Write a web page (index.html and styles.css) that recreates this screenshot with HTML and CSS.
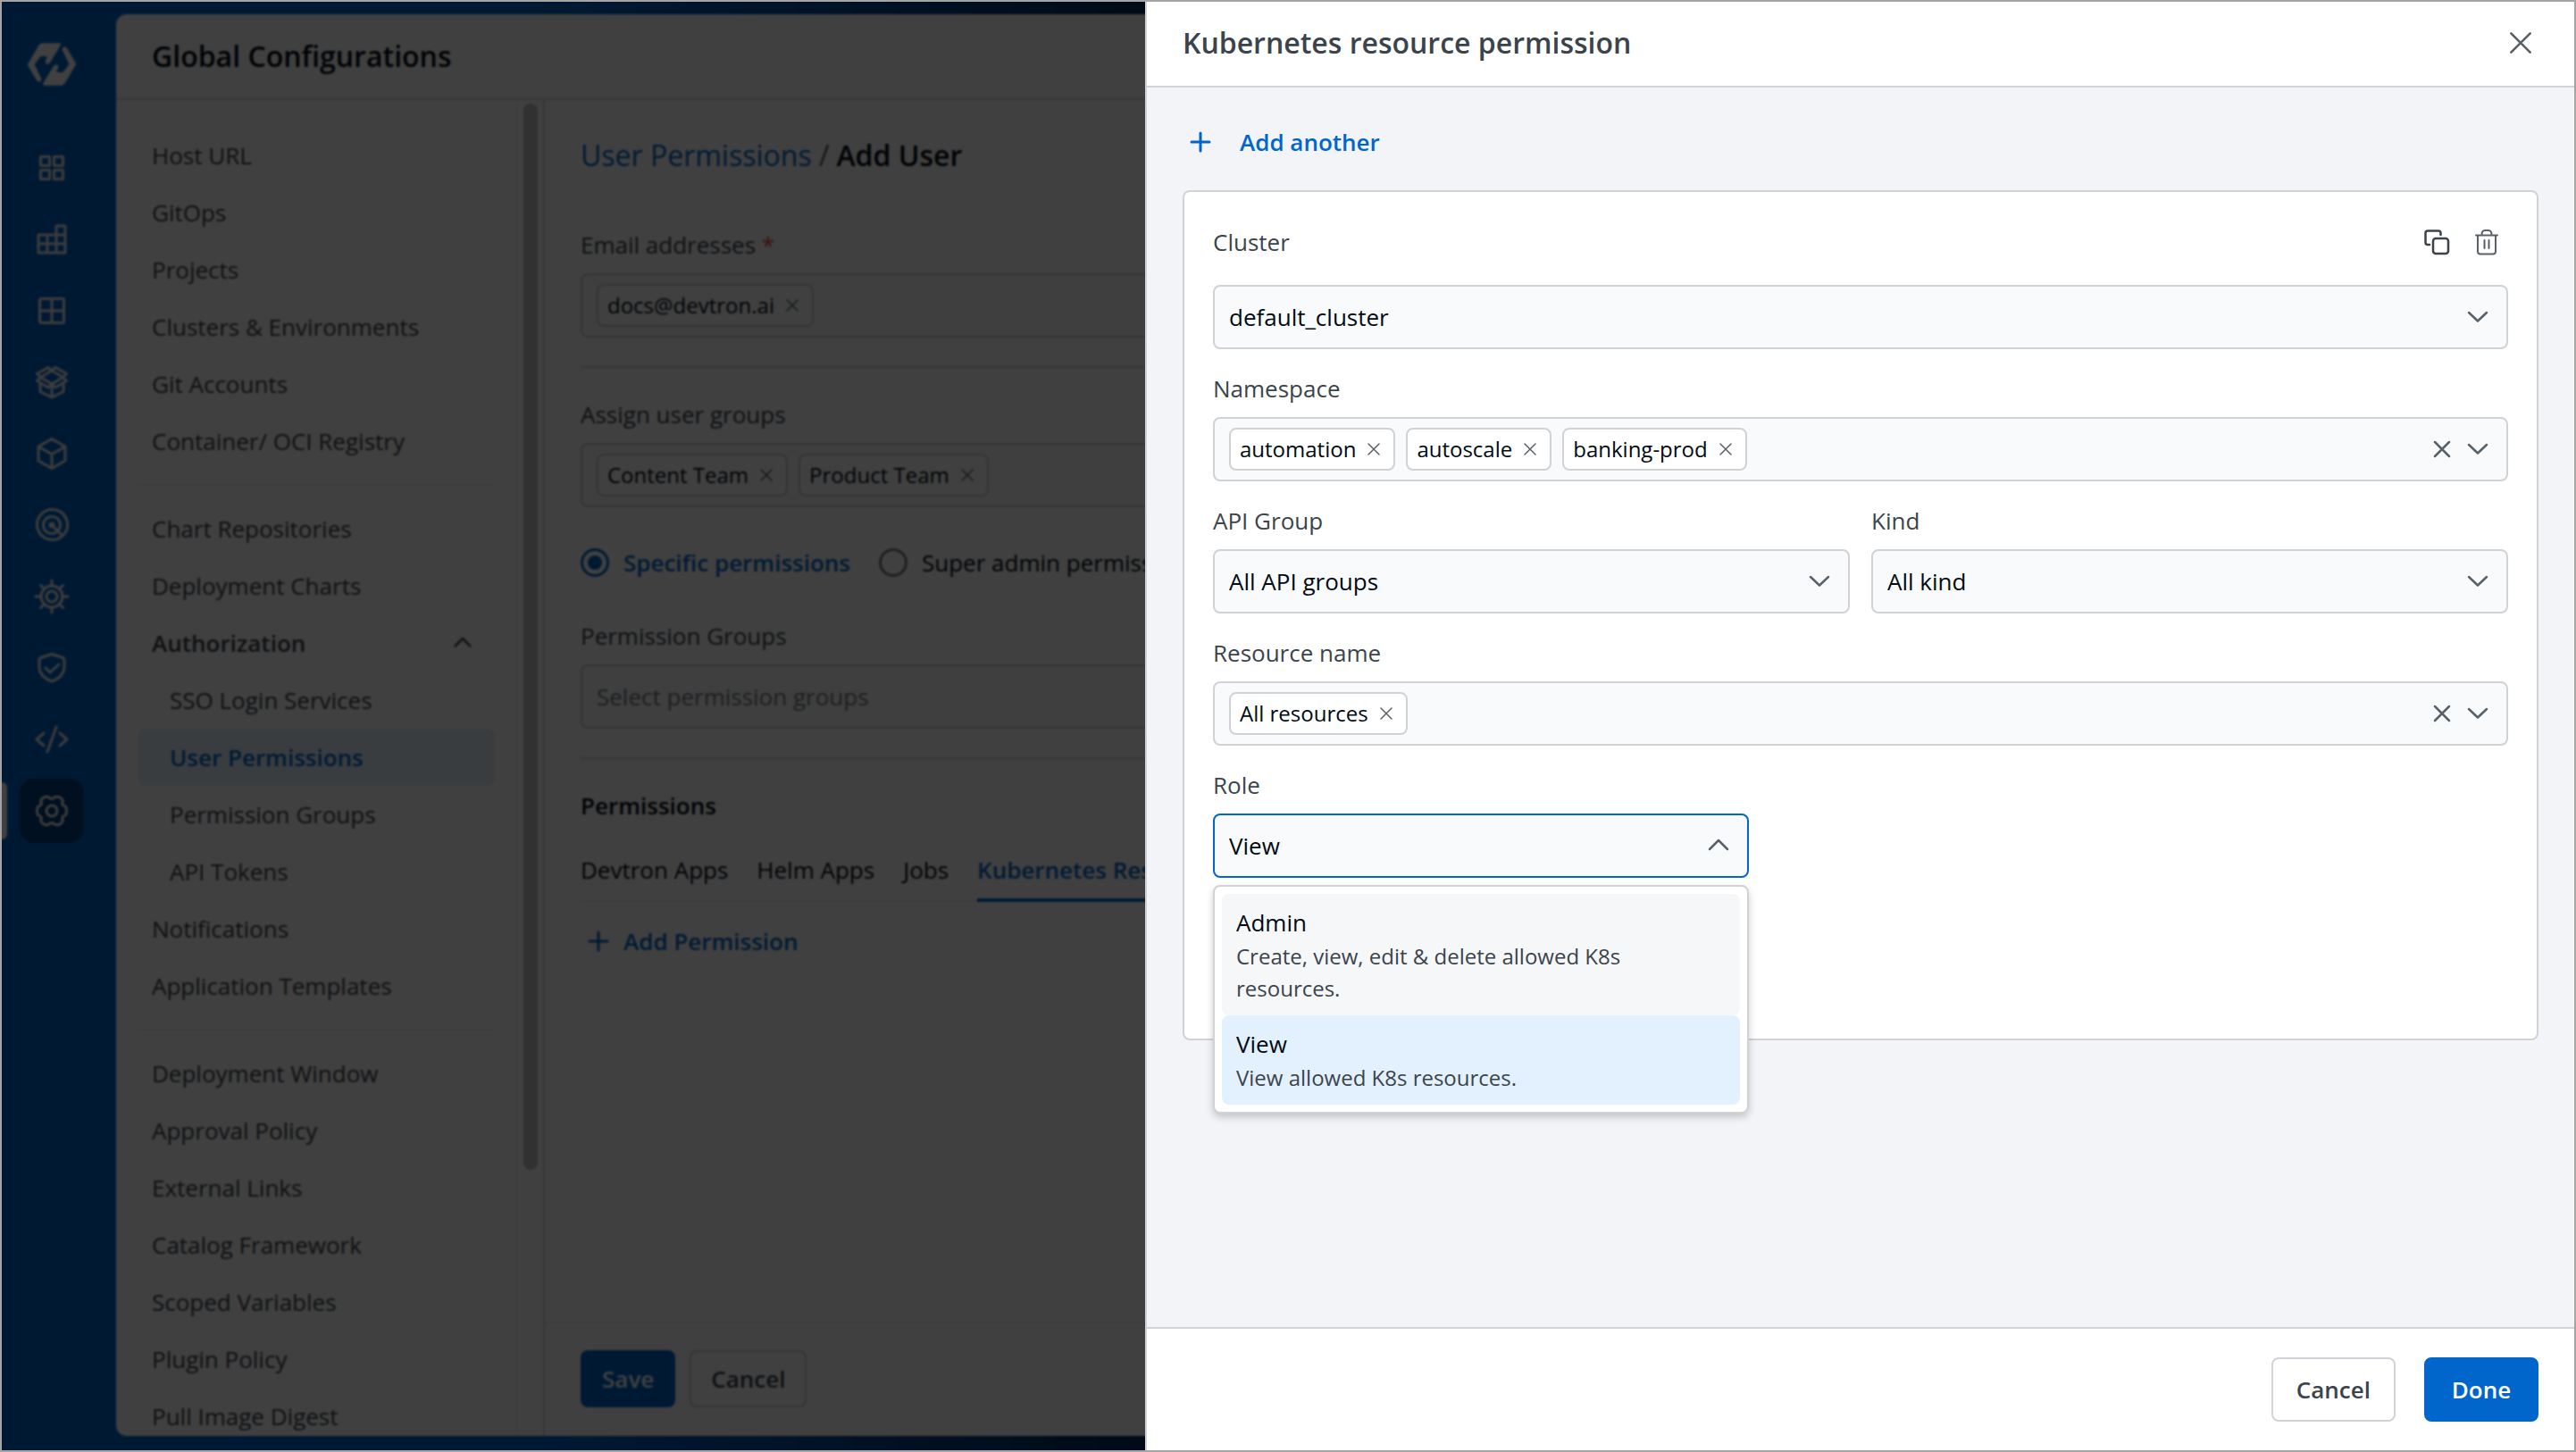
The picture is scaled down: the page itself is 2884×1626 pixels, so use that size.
FILE: index.html
```html
<!DOCTYPE html>
<html lang="en">
<head>
  <meta charset="UTF-8">
  <meta name="viewport" content="width=device-width, initial-scale=1.0">
  <title>Kubernetes resource permission</title>
  <link rel="stylesheet" href="styles.css">
</head>
<body>
  <!-- Shared icons -->
  <svg class="sprite" aria-hidden="true">
    <symbol id="i-close" viewBox="0 0 24 24"><path d="M4 4l16 16M20 4L4 20"/></symbol>
    <symbol id="i-down" viewBox="0 0 24 24"><path d="M2 7l10 9.500L22 7"/></symbol>
    <symbol id="i-up" viewBox="0 0 24 24"><path d="M2 16l10-10 10 10"/></symbol>
    <symbol id="i-plus" viewBox="0 0 24 24"><path d="M12 2v20M2 12h20"/></symbol>
  </svg>

  <div class="page">
    <nav class="rail" aria-label="Main">
      <a class="logo" href="#" aria-label="Home">
        <svg width="54" height="48" viewBox="93 37 163 145">
          <path id="logo-half" d="M95 106L130 46Q135 38 144 38H198Q208 38 203 47L168 104Q163 111 157 108Q151 105 153 98L158 86Q159 82 154 82H140Q136 82 134 86L116 110L139 158Q141 165 134 168Q128 170 124 165L95 116Q92 111 95 106Z"/>
          <use href="#logo-half" transform="rotate(180 174.500 109.500)"/>
        </svg>
      </a>
      <a class="rail-link" href="#" aria-label="Applications"><svg viewBox="0 0 40 40"><path d="M7.500 7.500h10v10h-10zM22.500 7.500h10v10h-10zM7.500 22.500h10v10h-10zM22.500 22.500h10v10h-10z"/></svg></a>
      <a class="rail-link" href="#" aria-label="Jobs"><svg viewBox="0 0 40 40"><path d="M5 15h30v20H5zM25 35V5h10v10M5 25h30M15 15v20"/></svg></a>
      <a class="rail-link" href="#" aria-label="Application groups"><svg viewBox="0 0 40 40"><rect x="6.500" y="6.500" width="27" height="27" rx="2"/><path d="M20 7v26M7 20h26"/></svg></a>
      <a class="rail-link" href="#" aria-label="Software distribution"><svg viewBox="0 0 40 40"><path d="M3.500 10.500L16 3.500L20 7L24 3.500L36.500 10.500L32.500 14.500L36.500 18.500L24 26L20 22L16 26L3.500 18.500L7.500 14.500ZM20 7L32.500 14.500L20 22L7.500 14.500ZM7 22.500V30.500L20 37L33 30.500V22.500M20 23V36"/></svg></a>
      <a class="rail-link" href="#" aria-label="Resource browser"><svg viewBox="0 0 40 40"><path d="M20 3.500L35 12V28L20 36.500L5 28V12ZM5.500 12.500L20 20.500L34.500 12.500M20 20.500V36"/></svg></a>
      <a class="rail-link" href="#" aria-label="Resource watcher"><svg viewBox="0 0 40 40"><path d="M32 32A17 17 0 1 1 33 31M28 25A9.500 9.500 0 1 0 25 28M20 20l12 12"/><circle cx="20" cy="20" r="2"/></svg></a>
      <a class="rail-link" href="#" aria-label="Clusters"><svg viewBox="0 0 40 40"><circle cx="20" cy="20" r="12"/><circle cx="20" cy="20" r="6"/><path d="M20 8V2M20 32v6M8 20H2M32 20h6M11.500 11.500L7.500 7.500M28.500 11.500l4-4M11.500 28.500l-4 4M28.500 28.500l4 4"/></svg></a>
      <a class="rail-link" href="#" aria-label="Security"><svg viewBox="0 0 40 40"><path d="M20 4.500L32 8.500Q34 9 34 11V18Q34 30 20 35Q6 30 6 18V11Q6 9 8 8.500ZM13 20l5 5 10-9"/></svg></a>
      <a class="rail-link" href="#" aria-label="Bulk edit"><svg viewBox="0 0 40 40"><path d="M11 13L3 20l8 7M29 13l8 7-8 7M25 6L15 34"/></svg></a>
      <a class="rail-link rail-link-active" href="#" aria-label="Global configurations"><svg viewBox="0 0 40 40"><path d="M36.500 20Q36.500 25 34 25.600Q30.500 26.500 32.200 29.800Q33 32.500 29 35Q25 36.500 22.400 34.500Q20 32.500 17.600 34.500Q15 36.500 11 35Q7 32.500 7.800 29.800Q9.500 26.500 6 25.600Q3.500 25 3.500 20Q3.500 15 6 14.400Q9.500 13.500 7.800 10.200Q7 7.500 11 5Q15 3.500 17.600 5.500Q20 7.500 22.400 5.500Q25 3.500 29 5Q33 7.500 32.200 10.200Q30.500 13.500 34 14.400Q36.500 15 36.500 20Z"/><circle cx="20" cy="20" r="6"/></svg></a>
    </nav>

    <div class="shell">
      <header class="shell-header">
        <h1 class="title">Global Configurations</h1>
      </header>

      <div class="shell-body">
        <div class="menu">
          <nav class="menu-list" aria-label="Global configurations">
            <a class="menu-item" href="#">Host URL</a>
            <a class="menu-item" href="#">GitOps</a>
            <a class="menu-item" href="#">Projects</a>
            <a class="menu-item" href="#">Clusters &amp; Environments</a>
            <a class="menu-item" href="#">Git Accounts</a>
            <a class="menu-item" href="#">Container/ OCI Registry</a>
            <hr class="menu-rule">
            <a class="menu-item" href="#">Chart Repositories</a>
            <a class="menu-item" href="#">Deployment Charts</a>
            <button class="menu-item menu-toggle" type="button" aria-expanded="true">
              Authorization
              <svg class="icon icon-20 icon-bold"><use href="#i-up"/></svg>
            </button>
            <a class="menu-item menu-sub" href="#">SSO Login Services</a>
            <a class="menu-item menu-sub menu-active" href="#">User Permissions</a>
            <a class="menu-item menu-sub" href="#">Permission Groups</a>
            <a class="menu-item menu-sub" href="#">API Tokens</a>
            <a class="menu-item" href="#">Notifications</a>
            <a class="menu-item" href="#">Application Templates</a>
            <hr class="menu-rule">
            <a class="menu-item" href="#">Deployment Window</a>
            <a class="menu-item" href="#">Approval Policy</a>
            <a class="menu-item" href="#">External Links</a>
            <a class="menu-item" href="#">Catalog Framework</a>
            <a class="menu-item" href="#">Scoped Variables</a>
            <a class="menu-item" href="#">Plugin Policy</a>
            <a class="menu-item" href="#">Pull Image Digest</a>
          </nav>
          <div class="scroll-track"><div class="scroll-thumb"></div></div>
        </div>

        <main class="content">
          <form class="user-form">
            <div class="breadcrumb">
              <a href="#">User Permissions</a>
              <span class="slash">/</span>
              <strong>Add User</strong>
            </div>

            <div class="field">
              <label for="emails">Email addresses <span class="required">*</span></label>
              <div class="control">
                <span class="chip">docs@devtron.ai <button type="button" aria-label="Remove docs@devtron.ai"><svg class="icon icon-18"><use href="#i-close"/></svg></button></span>
                <input id="emails" type="text">
              </div>
            </div>

            <hr class="rule">

            <div class="field">
              <label for="groups">Assign user groups</label>
              <div class="control">
                <span class="chip">Content Team <button type="button" aria-label="Remove Content Team"><svg class="icon icon-18"><use href="#i-close"/></svg></button></span>
                <span class="chip">Product Team <button type="button" aria-label="Remove Product Team"><svg class="icon icon-18"><use href="#i-close"/></svg></button></span>
                <input id="groups" type="text">
              </div>
            </div>

            <div class="radios">
              <label class="radio radio-on"><input type="radio" name="access" checked>Specific permissions</label>
              <label class="radio"><input type="radio" name="access">Super admin permission</label>
            </div>

            <div class="field">
              <label for="perm-groups">Permission Groups</label>
              <div class="control">
                <input id="perm-groups" type="text" placeholder="Select permission groups">
              </div>
            </div>

            <hr class="rule">

            <h2 class="section-title">Permissions</h2>
            <div class="tabs" role="tablist">
              <button class="tab" type="button" role="tab">Devtron Apps</button>
              <button class="tab" type="button" role="tab">Helm Apps</button>
              <button class="tab" type="button" role="tab">Jobs</button>
              <button class="tab tab-active" type="button" role="tab" aria-selected="true">Kubernetes Resources</button>
            </div>
            <button class="add-permission" type="button">
              <svg class="icon icon-24 icon-bold"><use href="#i-plus"/></svg>Add Permission
            </button>
          </form>

          <footer class="form-footer">
            <button class="btn btn-primary" type="button">Save</button>
            <button class="btn" type="button">Cancel</button>
          </footer>
        </main>
      </div>
    </div>

    <div class="backdrop"></div>

    <!-- Side drawer -->
    <section class="drawer" role="dialog" aria-labelledby="drawer-title">
      <header class="drawer-header">
        <h2 class="title" id="drawer-title">Kubernetes resource permission</h2>
        <button class="icon-btn" type="button" aria-label="Close"><svg class="icon icon-32"><use href="#i-close"/></svg></button>
      </header>

      <div class="drawer-body">
        <button class="add-another" type="button">
          <svg class="icon icon-24 icon-bold"><use href="#i-plus"/></svg>Add another
        </button>

        <div class="card">
          <div class="card-top">
            <label for="cluster">Cluster</label>
            <div class="card-actions">
              <button class="icon-btn" type="button" aria-label="Duplicate">
                <svg class="icon icon-32 icon-dark" viewBox="0 0 32 32"><path d="M8 19H6Q3.500 19 3.500 16.500V6Q3.500 3.500 6 3.500H18Q20.500 3.500 20.500 6V8"/><rect x="12" y="12" width="17" height="17" rx="3"/></svg>
              </button>
              <button class="icon-btn" type="button" aria-label="Delete">
                <svg class="icon icon-32" viewBox="0 0 32 32"><path d="M4 8.500h24M6 9v17.500Q6 29.500 9 29.500H23Q26 29.500 26 26.500V9M10.500 8Q10.500 3 14 3H18Q21.500 3 21.500 8M13.500 14v9M18.500 14v9"/></svg>
              </button>
            </div>
          </div>

          <div class="picker">
            <select id="cluster"><option>default_cluster</option></select>
            <svg class="icon icon-24"><use href="#i-down"/></svg>
          </div>

          <div class="field">
            <label for="namespace">Namespace</label>
            <div class="control">
              <span class="chip">automation <button type="button" aria-label="Remove automation"><svg class="icon icon-18"><use href="#i-close"/></svg></button></span>
              <span class="chip">autoscale <button type="button" aria-label="Remove autoscale"><svg class="icon icon-18"><use href="#i-close"/></svg></button></span>
              <span class="chip">banking-prod <button type="button" aria-label="Remove banking-prod"><svg class="icon icon-18"><use href="#i-close"/></svg></button></span>
              <input id="namespace" type="text">
              <button class="control-btn" type="button" aria-label="Clear namespaces"><svg class="icon icon-24"><use href="#i-close"/></svg></button>
              <button class="control-btn" type="button" aria-label="Show namespaces"><svg class="icon icon-24"><use href="#i-down"/></svg></button>
            </div>
          </div>

          <div class="two-columns">
            <div class="field">
              <label for="api-group">API Group</label>
              <div class="picker">
                <select id="api-group"><option>All API groups</option></select>
                <svg class="icon icon-24"><use href="#i-down"/></svg>
              </div>
            </div>
            <div class="field">
              <label for="kind">Kind</label>
              <div class="picker">
                <select id="kind"><option>All kind</option></select>
                <svg class="icon icon-24"><use href="#i-down"/></svg>
              </div>
            </div>
          </div>

          <div class="field">
            <label for="resource">Resource name</label>
            <div class="control">
              <span class="chip">All resources <button type="button" aria-label="Remove All resources"><svg class="icon icon-18"><use href="#i-close"/></svg></button></span>
              <input id="resource" type="text">
              <button class="control-btn" type="button" aria-label="Clear resources"><svg class="icon icon-24"><use href="#i-close"/></svg></button>
              <button class="control-btn" type="button" aria-label="Show resources"><svg class="icon icon-24"><use href="#i-down"/></svg></button>
            </div>
          </div>

          <div class="field role-field">
            <label for="role">Role</label>
            <div class="picker picker-open">
              <select id="role"><option>View</option><option>Admin</option></select>
              <svg class="icon icon-24"><use href="#i-up"/></svg>
            </div>
            <ul class="options" role="listbox" aria-label="Role">
              <li class="option option-hover" role="option">
                <div class="option-name">Admin</div>
                <div class="option-text">Create, view, edit &amp; delete allowed K8s resources.</div>
              </li>
              <li class="option option-selected" role="option" aria-selected="true">
                <div class="option-name">View</div>
                <div class="option-text">View allowed K8s resources.</div>
              </li>
            </ul>
          </div>
        </div>
      </div>

      <footer class="drawer-footer">
        <button class="btn btn-large" type="button">Cancel</button>
        <button class="btn btn-large btn-primary" type="button">Done</button>
      </footer>
    </section>
  </div>
</body>
</html>
```
FILE: styles.css
```css
* {
  box-sizing: border-box;
}
body {
  margin: 0;
  font-family: "Open Sans", "Noto Sans", sans-serif;
  font-size: 26px;
  line-height: 40px;
  color: #000a14;
}
button, input, select {
  font: inherit;
  color: inherit;
  margin: 0;
  padding: 0;
  border: none;
  background: none;
}
button {
  cursor: pointer;
}
a {
  color: inherit;
  text-decoration: none;
}
h1, h2, ul {
  margin: 0;
  padding: 0;
}
hr {
  border: none;
  margin: 0;
}
label {
  color: #3b444c;
}

/* Icons */
.sprite {
  display: none;
}
.icon {
  flex: none;
  fill: none;
  stroke: #596168;
  stroke-width: 2;
  stroke-linecap: round;
  stroke-linejoin: round;
}
.icon-18 {
  width: 18px;
  height: 18px;
}
.icon-20 {
  width: 20px;
  height: 20px;
}
.icon-24 {
  width: 24px;
  height: 24px;
  stroke-width: 2.5;
}
.icon-32 {
  width: 32px;
  height: 32px;
}
.icon-bold {
  stroke: currentColor;
  stroke-width: 3;
}
.icon-dark {
  stroke: #3b444c;
  stroke-width: 2.5;
}

.page {
  position: relative;
  display: flex;
  height: 100vh;
  overflow: hidden;
  border: 2px solid #a5a5a5;
  background: linear-gradient(90deg, #0066cc 20%, #002a58 45%);
}

/* Icon rail */
.rail {
  display: flex;
  flex-direction: column;
  align-items: center;
  gap: 8px;
  width: 128px;
  padding: 46px 16px 0 0;
  flex: none;
}
.logo {
  height: 48px;
  margin-bottom: 48px;
  fill: #fff;
}
.logo svg {
  display: block;
}
.rail-link {
  display: flex;
  align-items: center;
  justify-content: center;
  width: 72px;
  height: 72px;
  border-radius: 16px;
}
.rail-link svg {
  width: 40px;
  height: 40px;
  fill: none;
  stroke: #eee;
  stroke-width: 3;
  stroke-linecap: round;
  stroke-linejoin: round;
}
.rail-link-active {
  position: relative;
  background: #00407f;
}
.rail-link-active::before {
  content: "";
  position: absolute;
  left: -20px;
  top: 4px;
  width: 6px;
  height: 64px;
  border-radius: 0 6px 6px 0;
  background: #fff;
}

/* Main window */
.shell {
  flex: 1;
  display: flex;
  flex-direction: column;
  min-width: 0;
  margin: 14px 16px 16px 0;
  border-radius: 12px;
  overflow: hidden;
  background: #fff;
}
.shell-header {
  display: flex;
  align-items: center;
  flex: none;
  height: 96px;
  padding: 0 40px;
  border-bottom: 2px solid #d6dbdf;
}
.title {
  font-size: 32px;
  line-height: 48px;
  font-weight: 600;
}
.shell-body {
  flex: 1;
  display: flex;
  min-height: 0;
}

/* Settings menu */
.menu {
  display: flex;
  flex: none;
  width: 480px;
  overflow: hidden;
  border-right: 2px solid #d6dbdf;
}
.menu-list {
  flex: 1;
  padding: 30px 24px;
}
.menu-item {
  display: flex;
  align-items: center;
  justify-content: space-between;
  width: 100%;
  height: 64px;
  padding: 0 16px;
  border-radius: 8px;
  color: #3b444c;
}
.menu-toggle {
  padding-right: 26px;
  font-weight: 600;
}
.menu-sub {
  padding-left: 36px;
}
.menu-active {
  background: #e5f2ff;
  color: #0066cc;
  font-weight: 600;
}
.menu-rule {
  height: 2px;
  margin: 16px 0;
  background: #edf1f5;
}
.scroll-track {
  flex: none;
  width: 30px;
  padding: 4px 6px 0;
  border-left: 2px solid #edf1f5;
}
.scroll-thumb {
  width: 16px;
  height: 80%;
  border-radius: 8px;
  background: #c1c1c1;
}

/* Add user form */
.content {
  flex: 1;
  display: flex;
  flex-direction: column;
  min-width: 0;
}
.user-form {
  flex: 1;
  padding: 38px 40px;
}
.breadcrumb {
  display: flex;
  gap: 8px;
  margin-bottom: 56px;
  font-size: 32px;
  line-height: 48px;
}
.breadcrumb a {
  color: #0066cc;
}
.breadcrumb strong {
  font-weight: 600;
}
.slash {
  color: #596168;
}
.required {
  color: #f33e3e;
}
.rule {
  height: 2px;
  margin: 32px 0;
  background: #d6dbdf;
}
.radios {
  display: flex;
  gap: 32px;
  padding: 42px 0;
}
.radio {
  display: flex;
  align-items: center;
  gap: 16px;
  color: #000a14;
}
.radio-on {
  color: #0066cc;
  font-weight: 600;
}
.radio input {
  appearance: none;
  display: grid;
  place-items: center;
  width: 32px;
  height: 32px;
  border: 3px solid #767d84;
  border-radius: 50%;
}
.radio input:checked {
  border-color: #0066cc;
}
.radio input:checked::after {
  content: "";
  width: 16px;
  height: 16px;
  border-radius: 50%;
  background: #0066cc;
}
.section-title {
  font-size: 26px;
  font-weight: 600;
}
.tabs {
  display: flex;
  gap: 32px;
  margin: 32px 0 24px;
  box-shadow: inset 0 -2px #edf1f5;
}
.tab {
  padding-bottom: 12px;
  border-bottom: 4px solid transparent;
}
.tab-active {
  border-color: #0066cc;
  color: #0066cc;
  font-weight: 600;
}
.add-permission, .add-another {
  display: flex;
  align-items: center;
  padding-left: 8px;
  color: #0066cc;
  font-weight: 600;
}
.add-permission {
  gap: 16px;
}
.form-footer {
  display: flex;
  gap: 16px;
  padding: 30px 40px 32px;
  border-top: 2px solid #edf1f5;
}

/* Buttons */
.btn {
  height: 64px;
  padding: 0 22px;
  border: 2px solid #d0d4d9;
  border-radius: 8px;
  background: #fff;
  color: #3b444c;
  font-weight: 600;
}
.btn-large {
  min-width: 128px;
  height: 72px;
  padding: 0 26px;
}
.btn-primary {
  border-color: #0066cc;
  background: #0066cc;
  color: #fff;
}
.icon-btn {
  display: flex;
  align-items: center;
  justify-content: center;
  width: 48px;
  height: 48px;
}

/* Fields */
.field {
  display: flex;
  flex-direction: column;
  gap: 12px;
}
.control, .picker {
  height: 72px;
  border: 2px solid #d0d2d6;
  border-radius: 8px;
  background: #f9fafc;
}
.control {
  display: flex;
  align-items: center;
  padding: 0 12px 0 16px;
}
.control input {
  flex: 1;
  min-width: 0;
  outline: none;
}
.control input::placeholder {
  color: #767d84;
  opacity: 1;
}
.control-btn {
  display: flex;
  align-items: center;
  justify-content: center;
  width: 40px;
  height: 40px;
}
.chip {
  display: flex;
  align-items: center;
  gap: 8px;
  height: 48px;
  margin-right: 12px;
  padding: 0 10px;
  border: 2px solid #d0d2d6;
  border-radius: 8px;
  background: #fff;
  font-size: 24px;
}
.chip button {
  display: flex;
  align-items: center;
  justify-content: center;
  width: 24px;
  height: 24px;
}
.picker {
  display: grid;
  align-items: center;
}
.picker select, .picker .icon {
  grid-area: 1 / 1;
}
.picker select {
  appearance: none;
  width: 100%;
  height: 100%;
  padding: 0 64px 0 16px;
  outline: none;
}
.picker .icon {
  justify-self: end;
  margin-right: 20px;
  pointer-events: none;
}
.picker-open {
  border-color: #0066cc;
}

/* Drawer */
.backdrop {
  position: absolute;
  inset: 0;
  background: rgba(0, 0, 0, 0.75);
  backdrop-filter: blur(1px);
}
.drawer {
  position: absolute;
  top: 0;
  right: 0;
  bottom: 0;
  display: flex;
  flex-direction: column;
  width: 1600px;
  max-width: 100%;
  border-left: 2px solid #d0d2d6;
  background: #f2f4f8;
}
.drawer-header {
  display: flex;
  align-items: center;
  justify-content: space-between;
  height: 96px;
  padding: 0 36px 2px 40px;
  border-bottom: 2px solid #d0d2d6;
  background: #fff;
  color: #3b444c;
}
.drawer-body {
  flex: 1;
  padding: 40px;
}
.add-another {
  gap: 32px;
  height: 41px;
  margin-bottom: 34px;
}
.card {
  display: flex;
  flex-direction: column;
  gap: 24px;
  padding: 32px 32px 180px;
  border: 2px solid #d0d2d6;
  border-radius: 8px;
  background: #fff;
}
.card-top {
  display: flex;
  align-items: center;
  justify-content: space-between;
}
.card-actions {
  display: flex;
  gap: 8px;
}
.two-columns {
  display: grid;
  grid-template-columns: 1fr 1fr;
  gap: 24px;
}
.role-field {
  position: relative;
  width: 600px;
}
.options {
  position: absolute;
  top: 100%;
  left: 0;
  right: 0;
  margin-top: 8px;
  padding: 8px;
  list-style: none;
  border: 2px solid #d0d2d6;
  border-radius: 8px;
  background: #fff;
  box-shadow: 0 4px 8px rgba(0, 0, 0, 0.2);
}
.option {
  padding: 12px 16px;
  border-radius: 8px;
}
.option-hover {
  background: #f5f7f9;
}
.option-selected {
  background: #e3f1ff;
}
.option-text {
  font-size: 24px;
  line-height: 36px;
  color: #3b444c;
}
.drawer-footer {
  display: flex;
  justify-content: flex-end;
  gap: 32px;
  padding: 32px 40px;
  border-top: 2px solid #d0d2d6;
  background: #fff;
}
```
